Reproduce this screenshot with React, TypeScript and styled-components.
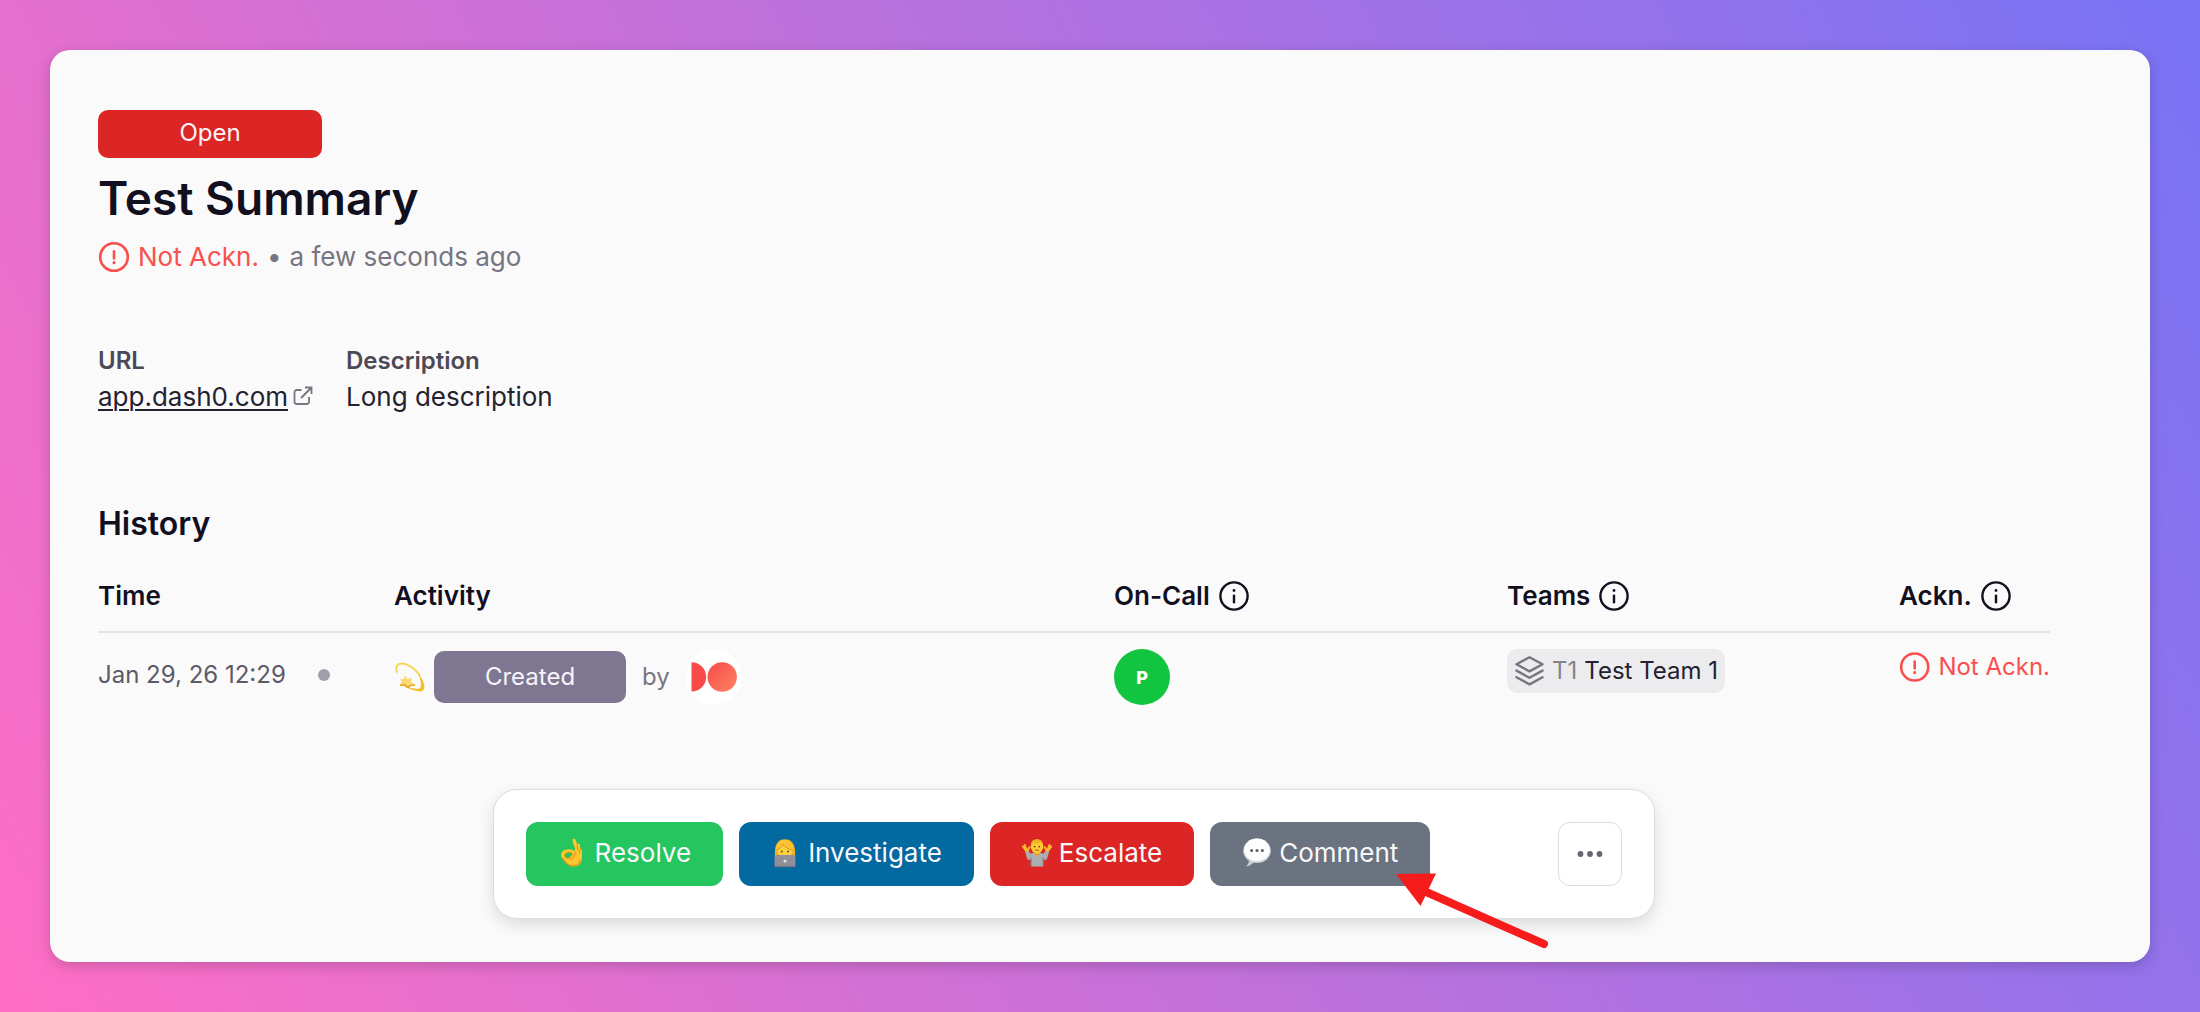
import React from "react";
import styled, { createGlobalStyle } from "styled-components";

const GlobalStyle = createGlobalStyle`
  *, *::before, *::after { box-sizing: border-box; }
  body {
    margin: 0;
    font-family: Inter, "Liberation Sans", sans-serif;
    color: #12101f;
    -webkit-font-smoothing: antialiased;
  }
`;

const Backdrop = styled.div`
  min-height: 100vh;
  padding: 50px;
  background: linear-gradient(61deg, #ff6ec4, #7873f5);
`;

const Card = styled.main`
  position: relative;
  padding: 60px 100px 43px 48px;
  border-radius: 20px;
  background: #fafafa;
  box-shadow: 0 4px 14px rgba(0, 0, 0, 0.18);
`;

const Pill = styled.span<{ $tone: string; $width: number; $height: number }>`
  display: flex;
  align-items: center;
  justify-content: center;
  width: ${(p) => p.$width}px;
  height: ${(p) => p.$height}px;
  border-radius: 10px;
  background: ${(p) => p.$tone};
  color: #f6f4f8;
  font-size: 24px;
  line-height: 32px;
`;

const StatusPill = styled(Pill)`
  padding-bottom: 2px;
`;

const Title = styled.h1`
  margin: 12px 0 15px;
  font-size: 46px;
  line-height: 56px;
  font-weight: 600;
`;

const Meta = styled.div`
  display: flex;
  align-items: center;
  gap: 8px;
  font-size: 26px;
  line-height: 32px;
  color: #777581;
`;

const AckStatus = styled.span<{ $size: number }>`
  display: flex;
  align-items: center;
  gap: 8px;
  font-size: ${(p) => p.$size}px;
  line-height: 32px;
  color: #f9504f;
  white-space: nowrap;
`;

const Details = styled.dl`
  display: flex;
  gap: 32px;
  margin: 72px 0 91px;
`;

const Detail = styled.div`
  dt {
    margin-bottom: 4px;
    font-size: 24px;
    line-height: 32px;
    font-weight: 600;
    color: #4b4956;
  }
  dd {
    display: flex;
    align-items: center;
    gap: 4px;
    margin: 0;
    font-size: 26px;
    line-height: 32px;
    color: #24222f;
  }
`;

const UrlLink = styled.a`
  color: inherit;
  text-decoration: underline;
  text-decoration-thickness: 2px;
  text-underline-offset: 3px;
`;

const SectionTitle = styled.h2`
  margin: 0 0 36px;
  font-size: 32px;
  line-height: 40px;
  font-weight: 600;
`;

const Table = styled.table`
  width: 100%;
  table-layout: fixed;
  border-collapse: separate;
  border-spacing: 0;
  text-align: left;
`;

const Th = styled.th<{ $width?: number }>`
  width: ${(p) => (p.$width ? `${p.$width}px` : "auto")};
  padding: 0 0 19px;
  border-bottom: 2px solid #e4e4ea;
  font-size: 26px;
  line-height: 32px;
  font-weight: 600;
`;

const ThLabel = styled.span`
  display: flex;
  align-items: center;
  gap: 8px;
`;

const Td = styled.td`
  padding: 16px 0 0;
  vertical-align: top;
`;

const TimeCell = styled.div`
  display: flex;
  align-items: center;
  gap: 32px;
  height: 52px;
  font-size: 24px;
  line-height: 32px;
  color: #5c5a66;
`;

const Dot = styled.span`
  width: 12px;
  height: 12px;
  border-radius: 50%;
  background: #a09fab;
`;

const ActivityCell = styled.div`
  display: flex;
  align-items: center;
  gap: 16px;
  height: 56px;
  font-size: 24px;
  line-height: 32px;
  color: #777581;
`;

const EventLabel = styled.span`
  display: flex;
  align-items: center;
  gap: 8px;
`;

const Avatar = styled.span<{ $bg: string }>`
  display: flex;
  align-items: center;
  justify-content: center;
  width: 56px;
  height: 56px;
  border-radius: 50%;
  overflow: hidden;
  background: ${(p) => p.$bg};
  color: #fff;
  font-size: 18px;
  font-weight: 800;
`;

const TeamChip = styled.span`
  display: inline-flex;
  align-items: center;
  gap: 7px;
  height: 44px;
  padding: 0 7px;
  border-radius: 10px;
  background: #ececef;
  font-size: 24px;
  line-height: 32px;
  color: #24222f;
  white-space: nowrap;
`;

const TeamKey = styled.span`
  color: #85848d;
`;

const AckCell = styled.div`
  padding-top: 2px;
`;

const Toolbar = styled.div`
  display: flex;
  align-items: center;
  gap: 16px;
  width: fit-content;
  margin: 84px auto 0;
  padding: 32px;
  border: 1px solid #dcdce3;
  border-radius: 24px;
  background: #fff;
  box-shadow: 0 6px 16px rgba(0, 0, 0, 0.12);
`;

const ActionButton = styled.button<{ $tone: string }>`
  display: flex;
  align-items: center;
  gap: 7px;
  height: 64px;
  padding: 0 32px 2px;
  border: 0;
  border-radius: 12px;
  background: ${(p) => p.$tone};
  color: #f8f8fa;
  font-family: inherit;
  font-size: 26px;
  line-height: 32px;
`;

const MoreButton = styled.button`
  display: flex;
  align-items: center;
  justify-content: center;
  width: 64px;
  height: 64px;
  margin-left: 112px;
  padding: 0;
  border: 1px solid #dcdce3;
  border-radius: 12px;
  background: #fff;
  color: #666571;
`;

const Pointer = styled.svg`
  position: absolute;
  left: 1344px;
  top: 820px;
  pointer-events: none;
`;

const AlertIcon = () => (
  <svg width="32" height="32" viewBox="0 0 32 32" fill="none" stroke="currentColor" strokeWidth="2.6" strokeLinecap="round" aria-hidden="true">
    <circle cx="16" cy="16" r="13.8" />
    <path d="M16 10.4v7" />
    <path d="M16 21.6v.2" strokeWidth="3" />
  </svg>
);

const InfoIcon = () => (
  <svg width="32" height="32" viewBox="0 0 32 32" fill="none" stroke="currentColor" strokeWidth="2.4" strokeLinecap="round" aria-hidden="true">
    <circle cx="16" cy="16" r="13.6" />
    <path d="M16 15.6v6.6" />
    <path d="M16 10.4v.1" strokeWidth="2.8" />
  </svg>
);

const ExternalIcon = () => (
  <svg width="22" height="24" viewBox="0 0 22 24" fill="none" stroke="#777581" strokeWidth="1.8" aria-hidden="true">
    <path d="M9.500 5H5a2.500 2.500 0 0 0-2.500 2.500v9A2.500 2.500 0 0 0 5 19h9.500a2.500 2.500 0 0 0 2.500-2.500V12" />
    <path d="M13 2.500h6.500V9M19.500 2.500L9 13" />
  </svg>
);

const StackIcon = () => (
  <svg width="31" height="32" viewBox="0 0 31 32" fill="none" stroke="#777680" strokeWidth="2.4" strokeLinejoin="round" strokeLinecap="round" aria-hidden="true">
    <path d="M15.500 2.200 28.500 9.200 15.500 16.400 2.500 9.200Z" />
    <path d="M2.500 15.600l13 7.200 13-7.200" />
    <path d="M2.500 22.200l13 7.200 13-7.200" />
  </svg>
);

const DotsIcon = () => (
  <svg width="28" height="8" viewBox="0 0 28 8" fill="currentColor" aria-hidden="true">
    <circle cx="4.500" cy="4" r="2.900" />
    <circle cx="14" cy="4" r="2.900" />
    <circle cx="23.500" cy="4" r="2.900" />
  </svg>
);

const DizzyIcon = () => (
  <svg width="32" height="32" viewBox="0 0 32 32" fill="none" aria-hidden="true">
    <path d="M3 11C1 6 3 2.500 8 2.600c6 .4 13.500 5.400 17.500 11.400" stroke="#fbd65a" strokeWidth="2" strokeLinecap="round" />
    <path d="M24 12c6 7.500 8.400 15.500 4.400 17.800-3.800 1.800-12.400-1.200-21.400-6.600 8 3.400 16 5.800 18.600 4.200 2.200-1.400 1.700-8-1.600-15.400Z" fill="#f6bd20" />
    <path d="M10.600 14.500l3 3.500 4.400-1-1 4 4 3-5 .8-2 2-3.400-2.800-4.600.4 1.800-3.600-1.600-2.600 3.600-.2Z" fill="#fbd873" />
    <path d="M6 24.200l4.600-.4 3.400 2.800 2-2 5-.8" stroke="#e3a317" strokeWidth="1.400" />
  </svg>
);

const OkHandIcon = () => (
  <svg width="30" height="32" viewBox="0 0 30 32" fill="none" aria-hidden="true">
    <path d="M14.600 3.600c-.2-1.800 2.400-2.600 3.200-.6l1.400 4.600c.8-1.400 2.800-1 2.800.8l.2 3.400c1.400 0 1.900 1 1.800 2.400-.2 3.800.6 8.400-1.400 11.800-2.600 4.400-9.600 4.600-13 1-2-2.200-4.600-3.400-6-6.600-1.600-4 1.200-7.800 5.400-8 3.200-.2 5.800.4 7.600 1.600l.4-3c-1-2.200-2-4.400-2.400-7.400Z" fill="#fdc62f" />
    <path d="M6.800 17.400c1.600-2.200 5.600-2.400 7.600-.6-.6 2.200-2.600 4.200-4.800 4.300-1.800-.1-3.200-1.800-2.800-3.700Z" fill="#24c45e" stroke="#d98f16" strokeWidth="1" />
    <path d="M19.200 8l.5 5M17.400 15c-.2 3.400-2.400 6.400-5.600 7.400M22.200 12l-.8 3.600M5 21.400c2 4 4.400 7.200 9.200 7.400 4.200 0 7.400-2.200 8.200-6" stroke="#df9417" strokeWidth="1.100" strokeLinecap="round" />
  </svg>
);

const TechnologistIcon = () => (
  <svg width="30" height="32" viewBox="0 0 30 32" fill="none" aria-hidden="true">
    <path d="M2.500 30c0-5 1.500-7.500 4.500-8.500h14c3 1 4.500 3.500 4.500 8.500Z" fill="#3050b8" />
    <path d="M14 2.200C7.400 2.200 4.400 7 4 13c-.2 3.600-.2 5-.2 7h20.400c0-2 0-3.400-.2-7-.4-6-3.400-10.800-10-10.800Z" fill="#f0ad20" />
    <ellipse cx="14" cy="13.500" rx="7.800" ry="7" fill="#fdd044" />
    <path d="M11 3c-4 1.600-6 5-6.200 10.600 3.200-1.200 5.800-3.600 7-6.400 2.400 3.400 6.600 5.600 11.200 6.200C22.400 7 19 3 14 2.400Z" fill="#fbc236" />
    <path d="M5.600 13.200c3-1.400 5.200-3.400 6.200-6 2.400 3.200 6.400 5.400 10.600 6" stroke="#d98f16" strokeWidth=".9" />
    <circle cx="10.800" cy="14.400" r="1" fill="#6b4a16" />
    <circle cx="17" cy="14.400" r="1" fill="#6b4a16" />
    <rect x="3.600" y="18" width="20.800" height="12" rx="1.500" fill="#8f9099" />
    <rect x="3.600" y="28.800" width="20.800" height="1.400" fill="#77787f" />
    <circle cx="14" cy="24.200" r="1.400" fill="#e8e8ec" />
  </svg>
);

const ShrugIcon = () => (
  <svg width="30" height="32" viewBox="0 0 30 32" fill="none" aria-hidden="true">
    <path d="M9 29.600V23l-3.600-.6L3 14.600l3.400-1.200 2.200 3.400 4-1.200h5l4 1.200 2.200-3.400 3.400 1.200-2.400 7.800-3.600.6v6.600Z" fill="#acaead" />
    <path d="M9 20.500v8.500M21.200 20.500v8.500" stroke="#7d7f82" strokeWidth="1.200" />
    <path d="M4.200 13.800 1 9.400M4.800 13.400 2.800 8M5.600 13.200l2-3M26 13.800l3.200-4.400M25.400 13.400l2-5.400M24.600 13.200l-2-3" stroke="#f7bd2b" strokeWidth="2" strokeLinecap="round" />
    <path d="M12.600 14h5v3.600l-2.500 1.400-2.500-1.400Z" fill="#e6a722" />
    <ellipse cx="15" cy="9.600" rx="6.200" ry="7" fill="#fdcb35" />
    <path d="M8.800 8.600C8.800 4.400 11.200 2.200 15 2.200s6.200 2.200 6.200 6.400C20 7.600 19.400 6.400 19 5.800c-2.600.8-5.600.8-8 0-.4.800-1 2-2.200 2.800Z" fill="#f2b424" />
    <circle cx="12.700" cy="9.600" r=".9" fill="#6b4a16" />
    <circle cx="17.300" cy="9.600" r=".9" fill="#6b4a16" />
    <path d="M13 13.200h4" stroke="#a8641a" strokeWidth="1" />
  </svg>
);

const SpeechIcon = () => (
  <svg width="30" height="32" viewBox="0 0 30 32" fill="none" aria-hidden="true">
    <path d="M7 22c.3 3-1 5.500-3 7.600 3.600-.8 6.500-2.600 8.500-5.200Z" fill="#c9cacd" />
    <ellipse cx="15" cy="13.800" rx="13.800" ry="12.200" fill="#d6d7da" />
    <ellipse cx="15" cy="12.800" rx="13" ry="11.200" fill="#fdfdfd" />
    <circle cx="9.600" cy="13.600" r="1.500" fill="#5b5d66" />
    <circle cx="15" cy="13.600" r="1.500" fill="#5b5d66" />
    <circle cx="20.400" cy="13.600" r="1.500" fill="#5b5d66" />
  </svg>
);

const DashLogo = () => (
  <svg width="56" height="56" viewBox="0 0 56 56" role="img" aria-label="Dash0">
    <defs>
      <linearGradient id="dash-orb" x1="0" y1="0" x2="1" y2="1">
        <stop offset="0" stopColor="#f54848" />
        <stop offset="1" stopColor="#ff8663" />
      </linearGradient>
    </defs>
    <path d="M5.500 13.300a14.600 14.600 0 0 1 0 29.300Z" fill="#f84a48" />
    <circle cx="36.200" cy="28" r="14.700" fill="url(#dash-orb)" />
  </svg>
);

const ACTIONS = [
  { label: "Resolve", tone: "#25c55f", icon: <OkHandIcon /> },
  { label: "Investigate", tone: "#0369a1", icon: <TechnologistIcon /> },
  { label: "Escalate", tone: "#dc2626", icon: <ShrugIcon /> },
  { label: "Comment", tone: "#6b7280", icon: <SpeechIcon /> },
];

const COLUMNS = [
  { label: "Time", width: 296, info: false },
  { label: "Activity", width: undefined, info: false },
  { label: "On-Call", width: 393, info: true },
  { label: "Teams", width: 392, info: true },
  { label: "Ackn.", width: 151, info: true },
];

const NotAcknowledged = ({ size }: { size: number }) => (
  <AckStatus $size={size}>
    <AlertIcon />
    Not Ackn.
  </AckStatus>
);

export default function App() {
  return (
    <Backdrop>
      <GlobalStyle />
      <Card>
        <StatusPill $tone="#dc2626" $width={224} $height={48}>Open</StatusPill>
        <Title>Test Summary</Title>
        <Meta>
          <NotAcknowledged size={26} />
          <span>•</span>
          <span>a few seconds ago</span>
        </Meta>

        <Details>
          <Detail>
            <dt>URL</dt>
            <dd>
              <UrlLink href="#">app.dash0.com</UrlLink>
              <ExternalIcon />
            </dd>
          </Detail>
          <Detail>
            <dt>Description</dt>
            <dd>Long description</dd>
          </Detail>
        </Details>

        <SectionTitle>History</SectionTitle>
        <Table>
          <thead>
            <tr>
              {COLUMNS.map((c) => (
                <Th key={c.label} $width={c.width} scope="col">
                  <ThLabel>
                    {c.label}
                    {c.info && <InfoIcon />}
                  </ThLabel>
                </Th>
              ))}
            </tr>
          </thead>
          <tbody>
            <tr>
              <Td>
                <TimeCell>
                  Jan 29, 26 12:29
                  <Dot />
                </TimeCell>
              </Td>
              <Td>
                <ActivityCell>
                  <EventLabel>
                    <DizzyIcon />
                    <Pill $tone="#7f7791" $width={192} $height={52}>Created</Pill>
                  </EventLabel>
                  <span>by</span>
                  <Avatar $bg="#ffffff">
                    <DashLogo />
                  </Avatar>
                </ActivityCell>
              </Td>
              <Td>
                <Avatar $bg="#11c540">P</Avatar>
              </Td>
              <Td>
                <TeamChip>
                  <StackIcon />
                  <TeamKey>T1</TeamKey>
                  Test Team 1
                </TeamChip>
              </Td>
              <Td>
                <AckCell>
                  <NotAcknowledged size={24} />
                </AckCell>
              </Td>
            </tr>
          </tbody>
        </Table>

        <Toolbar>
          {ACTIONS.map((a) => (
            <ActionButton key={a.label} type="button" $tone={a.tone}>
              {a.icon}
              {a.label}
            </ActionButton>
          ))}
          <MoreButton type="button" aria-label="More actions">
            <DotsIcon />
          </MoreButton>
        </Toolbar>

        <Pointer width="160" height="84" viewBox="0 0 160 84" aria-hidden="true">
          <path d="M30 21 150 74" stroke="#f71c1c" strokeWidth="8" strokeLinecap="round" />
          <path d="M2 4 42 3.500 26.500 36Z" fill="#f71c1c" />
        </Pointer>
      </Card>
    </Backdrop>
  );
}
